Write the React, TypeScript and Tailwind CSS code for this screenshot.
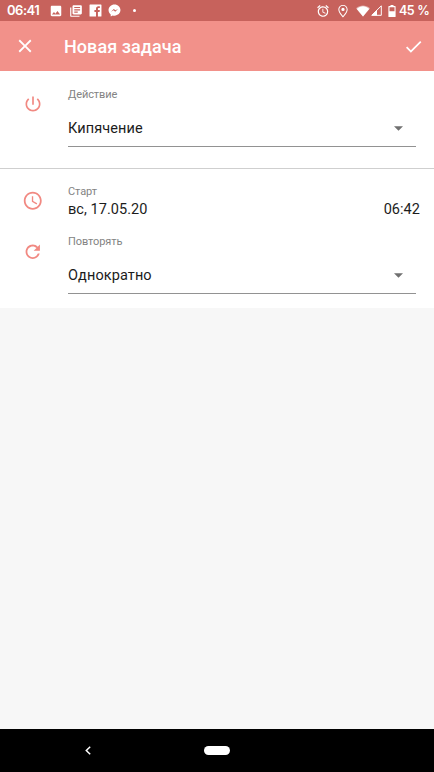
import type { ReactNode } from 'react';

type GlyphProps = { d: string; className: string };

function Glyph({ d, className }: GlyphProps) {
  return (
    <svg viewBox="0 0 24 24" fill="currentColor" fillRule="evenodd" className={'shrink-0 ' + className}>
      <path d={d} />
    </svg>
  );
}

const paths = {
  image:
    'M21 19V5c0-1.1-.9-2-2-2H5c-1.1 0-2 .9-2 2v14c0 1.1.9 2 2 2h14c1.1 0 2-.9 2-2zM8.5 13.5l2.5 3.01L14.5 12l4.5 6H5l3.5-4.5z',
  library:
    'M4 6H2v14c0 1.1.9 2 2 2h14v-2H4V6zm16-4H8c-1.1 0-2 .9-2 2v12c0 1.1.9 2 2 2h12c1.1 0 2-.9 2-2V4c0-1.1-.9-2-2-2zm-1 9H9V9h10v2zm-4 4H9v-2h6v2zm4-8H9V5h10v2z',
  facebook:
    'M2 1h20a1 1 0 0 1 1 1v20a1 1 0 0 1-1 1h-5.500v-8.300h3l.5-3.500h-3.500V9c0-1 .4-1.700 1.800-1.700H20V4.200c-.4 0-1.400-.2-2.600-.2-2.700 0-4.500 1.600-4.500 4.600v2.600H10v3.500h2.900V23H2a1 1 0 0 1-1-1V2a1 1 0 0 1 1-1z',
  messenger:
    'M12 1C5.700 1 1 5.600 1 11.300c0 3.200 1.500 6 4 7.900V23l3.600-2c1.100.4 2.200.5 3.400.5 6.300 0 11-4.500 11-10.200S18.300 1 12 1zM5.500 14.200l5.200-5.200 3 2.700 4.800-2.700-5.200 5.200-2.900-2.700z',
  alarm:
    'M22 5.720l-4.600-3.860-1.290 1.530 4.600 3.860L22 5.720zM7.880 3.390L6.600 1.860 2 5.710l1.290 1.530 4.590-3.850zM12.500 8H11v6l4.750 2.850.75-1.230-4-2.370V8zM12 4c-4.970 0-9 4.030-9 9s4.020 9 9 9a9 9 0 1 0 0-18zm0 16c-3.870 0-7-3.130-7-7s3.130-7 7-7 7 3.130 7 7-3.130 7-7 7z',
  place:
    'M12 1.500C7.600 1.500 4 5 4 9.300c0 5.600 8 13.700 8 13.700s8-8.100 8-13.700c0-4.300-3.600-7.800-8-7.800zM5.700 9.300c0-3.400 2.800-6.100 6.300-6.100s6.300 2.700 6.300 6.100c0 3.600-4 8.500-6.300 11.100-2.300-2.600-6.300-7.500-6.300-11.100zM12 6.500a2.800 2.800 0 1 0 0 5.600 2.800 2.800 0 0 0 0-5.600z',
  close:
    'M19 6.410L17.590 5 12 10.590 6.410 5 5 6.410 10.590 12 5 17.590 6.410 19 12 13.410 17.590 19 19 17.590 13.410 12z',
  check: 'M9 16.170L4.830 12l-1.420 1.410L9 19 21 7l-1.410-1.410z',
  power:
    'M13 3h-2v10h2V3zm4.830 2.170l-1.420 1.420C17.990 7.860 19 9.810 19 12c0 3.870-3.130 7-7 7s-7-3.130-7-7c0-2.190 1.010-4.140 2.580-5.420L6.170 5.170C4.230 6.820 3 9.260 3 12c0 4.970 4.030 9 9 9s9-4.030 9-9c0-2.740-1.230-5.180-3.170-6.830z',
  clock:
    'M11.990 2C6.470 2 2 6.480 2 12s4.470 10 9.990 10C17.520 22 22 17.520 22 12S17.520 2 11.990 2zM12 20c-4.420 0-8-3.580-8-8s3.580-8 8-8 8 3.580 8 8-3.580 8-8 8zM12.500 7H11v6l5.250 3.150.75-1.230-4.500-2.670z',
  refresh:
    'M17.650 6.350C16.200 4.900 14.210 4 12 4c-4.420 0-7.990 3.580-7.990 8s3.570 8 7.990 8c3.730 0 6.840-2.550 7.730-6h-2.080c-.82 2.330-3.040 4-5.650 4-3.310 0-6-2.690-6-6s2.690-6 6-6c1.660 0 3.140.69 4.220 1.780L13 11h7V4l-2.350 2.350z',
};

function StatusBar() {
  return (
    <div className="flex h-[21px] items-center bg-[#c7625c] pl-[7px] text-white font-['Inter',sans-serif]">
      <span className="w-[42px] text-[13px] leading-[21px] font-semibold tracking-[-0.5px]">06:41</span>
      <Glyph d={paths.image} className="size-[14px]" />
      <Glyph d={paths.library} className="ml-[6px] size-[14px]" />
      <Glyph d={paths.facebook} className="ml-[6px] size-[13px]" />
      <Glyph d={paths.messenger} className="ml-[6px] size-[13px]" />
      <span className="ml-[12px] size-[3px] rounded-full bg-white" />
      <Glyph d={paths.alarm} className="ml-auto size-[14px]" />
      <Glyph d={paths.place} className="ml-[6px] size-[14px]" />
      <svg viewBox="0 0 14 12" fill="currentColor" className="ml-[6px] h-[12px] w-[14px] shrink-0">
        <path d="M0 3.200C4-.4 10-.4 14 3.200L7 11.500z" fillOpacity=".45" />
        <path d="M.8 4C4.500.3 9.500.3 13.200 4L7 11.500z" />
      </svg>
      <svg viewBox="0 0 11 11" className="ml-[1px] size-[11px] shrink-0">
        <path d="M.8 10.300L10.300.8v9.500z" fill="none" stroke="currentColor" />
        <path d="M.5 10.500L6 5v5.500z" fill="currentColor" />
      </svg>
      <svg viewBox="0 0 8 12" fill="currentColor" className="ml-[6px] h-[12px] w-[8px] shrink-0">
        <path fillRule="evenodd" d="M2.500 0h3v1H7a.6.6 0 0 1 .6.600v9.800a.6.6 0 0 1-.6.600H1a.6.6 0 0 1-.6-.600V1.600A.6.6 0 0 1 1 1h1.500zM1.500 2.200v4h5v-4z" />
      </svg>
      <span className="ml-[3px] w-[35px] text-[12.5px] leading-[21px] font-semibold tracking-[-0.5px] whitespace-nowrap [word-spacing:0.5px]">45 %</span>
    </div>
  );
}

function IconCell({ children }: { children: ReactNode }) {
  return <div className="flex w-[65px] shrink-0 justify-center text-[#f18982]">{children}</div>;
}

function SelectField({ value }: { value: string }) {
  return (
    <div className="flex h-[38px] items-center border-b border-[#929292] pr-[13px]">
      <span className="flex-1 pt-[2px] text-[14.5px] leading-[36px] tracking-[0.1px] text-[#1c1c1c]">{value}</span>
      <svg viewBox="0 0 10 5" className="mt-px h-[5px] w-[9px] fill-[#707070]">
        <path d="M0 0h10L5 5z" />
      </svg>
    </div>
  );
}

const labelClass = 'text-[11px] leading-[14px] tracking-[-0.1px] text-[#838383]';

export default function App() {
  return (
    <div className="flex h-[772px] w-[434px] flex-col overflow-hidden bg-[#f7f7f7] font-['Roboto',sans-serif]">
      <StatusBar />
      <header className="flex h-[50px] items-center bg-[#f2918a] pr-[10px] pl-[14px] text-white">
        <Glyph d={paths.close} className="size-[22px]" />
        <h1 className="ml-[28px] flex-1 pt-[2px] text-[18px] leading-6 font-medium tracking-[0.07px]">Новая задача</h1>
        <Glyph d={paths.check} className="mt-px size-[21px]" />
      </header>

      <section className="flex h-[98px] border-b border-[#cfcfcf] bg-white">
        <IconCell>
          <Glyph d={paths.power} className="mt-[22.5px] size-[20px]" />
        </IconCell>
        <div className="ml-[3px] flex-1 pt-[17px] pr-[18px]">
          <div className={labelClass}>Действие</div>
          <div className="mt-[7px]">
            <SelectField value="Кипячение" />
          </div>
        </div>
      </section>

      <section className="h-[139px] bg-white">
        <div className="flex h-[60px]">
          <IconCell>
            <Glyph d={paths.clock} className="mt-[21px] size-[21.5px]" />
          </IconCell>
          <div className="ml-[3px] flex-1 pt-[16px] pr-[14px]">
            <div className={labelClass}>Старт</div>
            <div className="mt-[1px] flex justify-between text-[14.5px] leading-[20px] tracking-[0.05px] text-[#1c1c1c]">
              <span>вс, 17.05.20</span>
              <span>06:42</span>
            </div>
          </div>
        </div>
        <div className="flex">
          <IconCell>
            <Glyph d={paths.refresh} className="mt-[11.5px] size-[21.5px]" />
          </IconCell>
          <div className="ml-[3px] flex-1 pt-[6px] pr-[18px]">
            <div className={labelClass}>Повторять</div>
            <div className="mt-[7px]">
              <SelectField value="Однократно" />
            </div>
          </div>
        </div>
      </section>

      <main className="flex-1" />

      <nav className="flex h-[43px] items-center bg-black">
        <svg viewBox="0 0 6 9" className="ml-[85px] h-[9px] w-[6px]" fill="none" stroke="white" strokeWidth="1.500">
          <path d="M5.200.7L1.300 4.500l3.900 3.800" />
        </svg>
        <span className="ml-[113px] h-[9px] w-[26px] rounded-full bg-white" />
      </nav>
    </div>
  );
}
